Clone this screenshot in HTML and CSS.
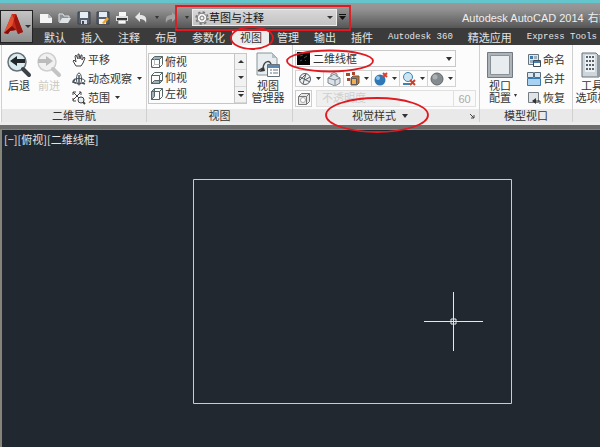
FILE: index.html
```html
<!DOCTYPE html>
<html lang="zh-CN">
<head>
<meta charset="utf-8">
<title>Autodesk AutoCAD 2014</title>
<link rel="stylesheet" href="styles.css">
</head>
<body>
<header class="top">
  <button class="app-btn" aria-label="应用程序菜单">
    <svg width="31" height="31" viewBox="0 0 31 31"><path d="M3 22 11 3h4l7 18-5 2-2-4-6 1-2 3z" fill="#c6281c"/><path d="M11 3 3 22l8-7 2-7z" fill="#e2512f"/><path d="M15 3l7 18-5 2-4-14z" fill="#9c150f"/><path d="M3 22l8-7 4 4-6 1-2 3z" fill="#7d100c"/><path d="M24 14h6l-3 3z" fill="#333"/></svg>
  </button>
  <div class="main">
    <div class="titlebar">
      <div class="qat">
        <button aria-label="新建"><svg width="14" height="14" viewBox="0 0 14 14"><path d="M1 3h8l4 4v5H1z" fill="#f4f4f4"/><path d="M9 3v4h4z" fill="#b9b9b9"/></svg></button>
        <button aria-label="打开"><svg width="14" height="14" viewBox="0 0 14 14"><path d="M1 11V3h4l1 2h5v2" fill="#8b9298" stroke="#dfe3e6"/><path d="M1 12l3-5h9l-3 5z" fill="#dfe3e6"/></svg></button>
        <button aria-label="保存"><svg width="14" height="14" viewBox="0 0 14 14"><path d="M1 1h12v12H1z" fill="#56606d" stroke="#3a434d"/><path d="M3 1h8v6H3z" fill="#e5edf4"/><path d="M4 9h6v4H4z" fill="#d3d9df"/><path d="M5 10h2v3H5z" fill="#3e4855"/></svg></button>
        <button aria-label="另存为"><svg width="14" height="14" viewBox="0 0 14 14"><path d="M1 1h12v12H1z" fill="#56606d" stroke="#3a434d"/><path d="M3 1h8v5H3z" fill="#e5edf4"/><path d="M3 8h7v5H3z" fill="#f1f1ee"/><path d="M6 12l5-6 2 2-5 5z" fill="#eba43a"/></svg></button>
        <button aria-label="打印"><svg width="14" height="14" viewBox="0 0 14 14"><path d="M4 1h7v4H4z" fill="#f7f7f7"/><path d="M1 5h12v5H1z" fill="#e1e1e1"/><path d="M2 7h10v2H2z" fill="#333"/><path d="M3 9h8v4H3z" fill="#f7f7f7" stroke="#555" stroke-width=".6"/></svg></button>
        <button aria-label="放弃"><svg width="14" height="14" viewBox="0 0 14 14"><path d="M1 6l5-5v3c5 0 7 2 6 8-1-3-3-4-6-4v3z" fill="#e6e6e6"/></svg></button>
        <svg class="tri" width="6" height="4" viewBox="0 0 6 4"><path d="M1 0h4L3 3z" fill="#333"/></svg>
        <button aria-label="重做"><svg width="14" height="14" viewBox="0 0 14 14"><path d="M13 6 8 1v3C3 4 1 6 2 12c1-3 3-4 6-4v3z" fill="#a3a3a3"/></svg></button>
        <svg class="tri" width="6" height="4" viewBox="0 0 6 4"><path d="M1 0h4L3 3z" fill="#333"/></svg>
      </div>
      <div class="workspace">
        <svg width="14" height="14" viewBox="0 0 14 14" fill="none" stroke="#777"><circle cx="7" cy="7" r="6" stroke-width="1.500" stroke-dasharray="2.400 2.300"/><circle cx="7" cy="7" r="4.800" fill="#f4f4f4"/><circle cx="7" cy="7" r="2"/></svg>
        <select aria-label="工作空间"><option>草图与注释</option></select>
        <svg class="tri" width="6" height="4" viewBox="0 0 6 4"><path d="M0 0h6L3 3z" fill="#333"/></svg>
      </div>
      <button class="more" aria-label="自定义快速访问工具栏"><svg width="7" height="7" viewBox="0 0 7 7"><path d="M0 0h7v1H0zM0 2h7L3.500 6z" fill="#111"/></svg></button>
      <div class="title">Autodesk AutoCAD 2014</div><div class="doc">右前</div>
    </div>
    <nav class="tabs">
      <a href="#">默认</a><a href="#">插入</a><a href="#">注释</a><a href="#">布局</a><a href="#">参数化</a><a href="#" class="active">视图</a><a href="#">管理</a><a href="#">输出</a><a href="#">插件</a><a href="#" class="latin">Autodesk 360</a><a href="#">精选应用</a><a href="#" class="latin">Express Tools</a>
    </nav>
  </div>
</header>

<section class="ribbon">
  <section class="panel nav-panel">
    <div class="body">
      <button class="big"><svg width="26" height="26" viewBox="0 0 26 26"><circle cx="11" cy="10" r="9" fill="#d9ebee" stroke="#657078" stroke-width="1.500"/><path d="M17 17l6 6" stroke="#3b4248" stroke-width="4" stroke-linecap="round"/><path d="M4 9l7-5v3h8v4h-8v3z" fill="#22272b"/></svg><span>后退</span></button>
      <button class="big off"><svg width="26" height="26" viewBox="0 0 26 26"><circle cx="11" cy="10" r="9" fill="#f1f1f1" stroke="#cfcfcf" stroke-width="1.500"/><path d="M17 17l6 6" stroke="#c4c4c4" stroke-width="4" stroke-linecap="round"/><path d="M17 9l-7-5v3H2v4h8v3z" fill="#bcbcbc"/></svg><span>前进</span></button>
      <div class="stack">
        <button><svg width="14" height="14" viewBox="0 0 14 14"><path d="M4 13 1 8l1-1 2 2-1-6 1-1 2 4 0-5h1l1 5 1-4 1 0 0 5 2-3 1 1-2 5-2 3z" fill="#fff" stroke="#444"/></svg>平移</button>
        <button><svg width="14" height="14" viewBox="0 0 14 14" fill="none" stroke="#46515b"><ellipse cx="7" cy="9" rx="6" ry="2.500"/><ellipse cx="7" cy="7" rx="2.500" ry="6"/><path d="M7 3v8M4 11l-3-1 2-3M10 11l3 1" stroke-width="1.500"/></svg>动态观察<svg class="tri" width="5" height="4" viewBox="0 0 5 4"><path d="M0 0h5L2.500 3z"/></svg></button>
        <button><svg width="14" height="14" viewBox="0 0 14 14" fill="none" stroke="#444"><path d="M1 4V1h3M1 1l7 7M7 1h2v3M9 1 1 9M1 7v3h3"/><circle cx="9" cy="9" r="3" fill="#e5eef2"/><path d="M11 11l2 2" stroke-width="2"/></svg>范围<svg class="tri" width="5" height="4" viewBox="0 0 5 4"><path d="M0 0h5L2.500 3z"/></svg></button>
      </div>
    </div>
    <h2>二维导航</h2>
  </section>

  <section class="panel view-panel">
    <div class="body">
      <div class="gallery">
        <div class="views">
          <button><svg width="14" height="14" viewBox="0 0 14 14" fill="#fff" stroke="#566"><path d="M1.500 4.500h8v8h-8zM9.500 12.500l3-3v-8l-3 3"/><path d="M1.500 4.500l3-3h8l-3 3z" fill="#9db0bb"/><path d="M4.500 4.500v5h5M4.500 9.500l-3 3" stroke="#bbb"/></svg>俯视</button>
          <button><svg width="14" height="14" viewBox="0 0 14 14" fill="none" stroke="#566"><path d="M1.500 12.500l3-3h8l-3 3z" fill="#9db0bb"/><path d="M1.500 4.500h8v8h-8zM1.500 4.500l3-3h8l-3 3M12.500 1.500v8"/></svg>仰视</button>
          <button><svg width="14" height="14" viewBox="0 0 14 14" fill="none" stroke="#566"><path d="M1.500 4.500l3-3v8l-3 3z" fill="#9db0bb"/><path d="M1.500 4.500h8v8h-8zM4.500 1.500h8l-3 3M12.500 1.500v8l-3 3"/></svg>左视</button>
        </div>
        <div class="scroll">
          <button aria-label="上一行"><svg width="6" height="4" viewBox="0 0 6 4"><path d="M0 3h6L3 0z"/></svg></button>
          <button aria-label="下一行"><svg width="6" height="4" viewBox="0 0 6 4"><path d="M0 0h6L3 3z"/></svg></button>
          <button aria-label="展开"><svg width="6" height="6" viewBox="0 0 6 6"><path d="M0 0h6v1H0zM0 3h6L3 6z"/></svg></button>
        </div>
      </div>
      <button class="big"><svg width="26" height="26" viewBox="0 0 26 26"><path d="M2 1h15l5 5v17H2z" fill="#e8edf0" stroke="#8a949b"/><path d="M17 1v5h5z" fill="#b6c0c6"/><path d="M3 19l5-3c1-8 8-8 8-3" fill="none" stroke="#444" stroke-width="1.500"/><path d="M4 20l5-5 1 4z" fill="#333"/><path d="M12.500 12.500h12v12h-12z" fill="#fff" stroke="#66727c"/><path d="M13 13h11v3H13z" fill="#5c89b2"/><path d="M15 18h2m1 0h5m-8 3h2m1 0h5" stroke="#678"/></svg><span>视图<br>管理器</span></button>
    </div>
    <h2>视图</h2>
  </section>

  <section class="panel style-panel">
    <div class="body">
      <div class="style-select">
        <svg width="13" height="13" viewBox="0 0 13 13"><path d="M0 0h13v13H0z" fill="#050505"/><path d="M3 4l3-1m1 3 3-2M3 9l2-1m3 1 1-1" stroke="#505050"/></svg>
        <select aria-label="视觉样式"><option>二维线框</option></select>
        <svg class="tri" width="6" height="4" viewBox="0 0 6 4"><path d="M0 0h6L3 4z"/></svg>
      </div>
      <div class="tools">
        <button aria-label="面样式"><svg width="14" height="14" viewBox="0 0 14 14" fill="#eef0f1" stroke="#596066"><circle cx="7" cy="7" r="5.500"/><path d="M2 5l10 5M8 1.500 5 12M2 8l6-6M7 8l5-3" fill="none"/></svg><svg class="tri" width="5" height="4" viewBox="0 0 5 4"><path d="M0 0h5L2.500 3z"/></svg></button>
        <button class="slim" aria-label="X 射线"><svg width="14" height="14" viewBox="0 0 14 14"><path d="M1 6l6-4 6 4v5l-5 3-7-3z" fill="#dce2e7" stroke="#7c8790"/><path d="M1 6l7 2 5-2M8 8v5M4 5V2q3-3 6 0v3" fill="none" stroke="#7c8790"/></svg></button>
        <button aria-label="材质"><svg width="14" height="14" viewBox="0 0 14 14"><path d="M0 1h4v3H0zM6 0h3v3H6zM1 6h3v3H1z" fill="#a5482f"/><path d="M5 6l2-2h6v7l-2 2H5z" fill="#c96f22" stroke="#6a5a50"/><path d="M5.500 6.500h5v6h-5z" fill="#f3ad55" stroke="#5a5a58"/></svg><svg class="tri" width="5" height="4" viewBox="0 0 5 4"><path d="M0 0h5L2.500 3z"/></svg></button>
        <button aria-label="阴影"><svg width="14" height="14" viewBox="0 0 14 14"><circle cx="6" cy="8" r="5.500" fill="#2f78b8"/><circle cx="4" cy="6" r="2" fill="#8fc2e8"/><path d="M9 1l4 4m0-4L9 5" stroke="#d5402f" stroke-width="2"/></svg><svg class="tri" width="5" height="4" viewBox="0 0 5 4"><path d="M0 0h5L2.500 3z"/></svg></button>
        <button aria-label="光源"><svg width="14" height="14" viewBox="0 0 14 14"><circle cx="6" cy="5" r="4.500" fill="#cde5f2" stroke="#3c82b0"/><path d="M1 12h7" stroke="#3c82b0" stroke-width="2"/><path d="M8 8l5 5m0-5-5 5" stroke="#c9402f" stroke-width="2"/></svg><svg class="tri" width="5" height="4" viewBox="0 0 5 4"><path d="M0 0h5L2.500 3z"/></svg></button>
        <button aria-label="着色"><svg width="14" height="14" viewBox="0 0 14 14"><circle cx="7" cy="7" r="6" fill="#858c91" stroke="#666"/><circle cx="5" cy="5" r="2.500" fill="#aab0b4"/></svg><svg class="tri" width="5" height="4" viewBox="0 0 5 4"><path d="M0 0h5L2.500 3z"/></svg></button>
      </div>
      <div class="opacity">
        <button aria-label="透明"><svg width="14" height="14" viewBox="0 0 14 14" fill="#e7e7e7" stroke="#777"><path d="M1.500 4.500l3-3h8v8l-3 3h-8z"/><path d="M1.500 4.500h8v8M9.500 4.500l3-3" fill="none"/><circle cx="6" cy="8" r="2.500" fill="#fff" stroke="#aaa"/></svg></button>
        <label class="bar"><span>不透明度</span><input value="60" disabled></label>
      </div>
    </div>
    <h2>视觉样式<svg class="tri" width="6" height="4" viewBox="0 0 6 4"><path d="M0 0h6L3 4z"/></svg><svg class="launch" width="5" height="5" viewBox="0 0 5 5"><path d="M0 0l4 4M4 1v3H1" fill="none" stroke="#444"/></svg></h2>
  </section>

  <section class="panel port-panel">
    <div class="body">
      <button class="big"><svg width="26" height="26" viewBox="0 0 26 26"><path d="M.5.5h25v25H.5z" fill="#aeb5ba" stroke="#727a80"/><path d="M3.500 3.500h19v19h-19z" fill="#e9ecee" stroke="#899299"/></svg><span>视口<br>配置</span><svg class="corner" width="3" height="3" viewBox="0 0 3 3"><path d="M0 0h3L1.500 3z"/></svg></button>
      <div class="stack">
        <button><svg width="14" height="14" viewBox="0 0 14 14"><path d="M1.500 1.500h10v10h-10z" fill="#e1e7eb" stroke="#66747e"/><path d="M3 3h3v3H3z" fill="#3c78ae"/><path d="M7 3h3v3H7zM3 7h3v3H3z" fill="#9eafbc"/><path d="M6.500 7.500h7v6h-7z" fill="#fff" stroke="#3b4a56"/><path d="M7 8h6v2H7z" fill="#487fac"/></svg>命名</button>
        <button><svg width="14" height="14" viewBox="0 0 14 14"><path d="M.5.500h6v5h-6zM7.500.500h6v5h-6z" fill="#dce8f1" stroke="#5a6c7a"/><path d="M.5 6.500h13v7H.5z" fill="#a9d2f2" stroke="#3b79ac"/></svg>合并</button>
        <button><svg width="14" height="14" viewBox="0 0 14 14"><path d="M1.500 1.500h10v10h-10z" fill="#e1e4e6" stroke="#747d83"/><path d="M13 13v-3H7" fill="none" stroke="#333"/><path d="M9 7v6l-4-3z" fill="#333"/></svg>恢复</button>
      </div>
    </div>
    <h2>模型视口</h2>
  </section>

  <section class="panel tool-panel">
    <div class="body">
      <button class="big"><svg width="22" height="26" viewBox="0 0 22 26"><path d="M1 1h14l3 3v21H1z" fill="#cfd6db" stroke="#68737b"/><path d="M4 3h10v17H4z" fill="#eef1f3"/><path d="M5 4h2v2H5zm3 0h2v2H8zm3 0h2v2h-2zM5 8h2v2H5zm3 0h2v2H8zm3 0h2v2h-2zM5 12h2v2H5zm3 0h2v2H8zm3 0h2v2h-2zM5 16h2v2H5zm3 0h2v2H8zm3 0h2v2h-2z" fill="#59646c"/><path d="M16 3h5v22h-5z" fill="#8f9aa2"/></svg><span>工具<br>选项板</span></button>
    </div>
    <h2>&nbsp;</h2>
  </section>
</section>

<main class="canvas">
  <p>[−][俯视][二维线框]</p>
  <svg class="drawing" width="600" height="316" viewBox="0 0 600 316" fill="none" stroke="#c9ccd0"><path d="M191.500 49.500h318v224h-318z"/><path d="M422 191.500h59M451.500 162v59" stroke="#e6e8ea"/><path d="M449 189h5v5h-5z" stroke="#e6e8ea"/></svg>
</main>

<svg class="marks" width="600" height="140" viewBox="0 0 600 140" fill="none" stroke="#e01a20" stroke-width="1.800"><path d="M176 6h174v24H176z"/><ellipse cx="252" cy="38" rx="21" ry="11"/><ellipse cx="330" cy="61" rx="43" ry="10.500"/><ellipse cx="377" cy="115" rx="51" ry="17"/></svg>
</body>
</html>
```

FILE: styles.css
```css
* { box-sizing: border-box; }
html, body { height: 100%; }
body {
  margin: 0;
  display: flex;
  flex-direction: column;
  overflow: hidden;
  position: relative;
  background: #6d6e6c;
  color: #333;
  font: 11px/12px "Liberation Sans", "Noto Sans CJK SC", sans-serif;
}
button, select, input { font: inherit; color: inherit; border: 0; margin: 0; padding: 0; background: none; }
button { display: flex; align-items: center; }
select { appearance: none; }
svg { display: block; flex: none; }
.tri, .scroll svg, .corner { fill: #333; }

.top { position: relative; border-top: 3px solid #65c5cd; }
.app-btn {
  position: absolute;
  left: 0;
  top: 7px;
  width: 33px;
  height: 33px;
  border: 1px solid #222;
  background: linear-gradient(#c4c4c4, #8d8d8d);
}
.titlebar {
  display: flex;
  align-items: center;
  height: 25px;
  padding: 4px 0 0 39px;
  background: linear-gradient(#999, #929292 25%, #565656);
  overflow: hidden;
}
.qat { display: flex; flex: none; align-items: center; gap: 5px; }
.qat .tri { margin: 0 1px; }
.qat button:last-of-type { margin-left: -2px; }
.workspace {
  display: flex;
  flex: none;
  align-items: center;
  width: 145px;
  height: 17px;
  margin-left: 1px;
  padding: 0 3px 0 2px;
  border: 1px solid #ececec;
  background: linear-gradient(#d8d8d8, #c3c3c3);
  color: #111;
}
.workspace select, .style-select select { flex: 1; min-width: 0; height: 15px; }
.more { flex: none; margin-left: 2px; }
.title { flex: none; margin-left: 116px; color: #eee; white-space: nowrap; }
.doc { flex: none; margin-left: 4px; color: #eee; white-space: nowrap; }
.tabs {
  display: flex;
  align-items: flex-end;
  height: 17px;
  padding-left: 36px;
  background: #3b3b3b;
  overflow: hidden;
}
.tabs a {
  flex: none;
  padding: 0 7px 0 8px;
  font-family: "Noto Sans CJK SC", sans-serif;
  line-height: 15px;
  color: #e4e4e4;
  text-decoration: none;
  white-space: nowrap;
}
.tabs .latin { font-family: "Liberation Mono", monospace; font-size: 9px; }
.tabs .active { background: #ededed; color: #333; }

.ribbon { display: flex; padding-left: 1px; background: #fcfcfc; border-bottom: 3px solid #ececec; overflow: hidden; }
.panel { flex: none; display: flex; flex-direction: column; border-left: 1px solid #d0d0d0; }
.body { display: flex; height: 64px; padding-top: 5px; }
.panel h2 {
  display: flex;
  align-items: center;
  justify-content: center;
  position: relative;
  height: 13px;
  margin: 0;
  background: #e9e9e9;
  font-size: 11px;
  font-weight: 400;
}
.nav-panel { width: 145px; }
.view-panel { width: 146px; }
.style-panel { width: 187px; }
.port-panel { width: 93px; }
.tool-panel { flex: 1 0 40px; }

.big { position: relative; flex-direction: column; justify-content: flex-start; width: 30px; padding-top: 2px; text-align: center; white-space: nowrap; }
.big span { margin-top: 2px; }
.off { color: #c9c9c4; }
.corner { position: absolute; right: -2px; top: 44px; }
.stack { display: flex; flex-direction: column; padding-left: 8px; }
.stack button { height: 19px; gap: 2px; white-space: nowrap; }
.stack .tri { margin-left: 3px; }
.nav-panel .body { padding-left: 2px; }

.gallery { display: flex; width: 99px; height: 51px; margin: 3px 6px 0 1px; border: 1px solid #c6c6c6; }
.views { flex: 1; padding-left: 1px; }
.views button { height: 16px; gap: 1px; }
.scroll { width: 12px; display: flex; flex-direction: column; border-left: 1px solid #c6c6c6; background: #f2f2f2; }
.scroll button { flex: 1; justify-content: center; border-bottom: 1px solid #d8d8d8; }

.style-panel .body { flex-direction: column; gap: 3px; padding: 5px 3px 0 2px; }
.style-select { display: flex; align-items: center; gap: 3px; width: 161px; height: 17px; padding: 0 3px 0 1px; border: 1px solid #c8c8c8; }
.tools { display: flex; width: 161px; height: 17px; border: 1px solid #d2d2d2; }
.tools button { flex: 1; justify-content: center; gap: 4px; border-right: 1px solid #d2d2d2; }
.tools .slim { flex: 0 0 20px; }
.tools button:last-child { border-right: 0; }
.opacity { display: flex; gap: 4px; height: 17px; }
.opacity button { width: 17px; justify-content: center; border: 1px solid #ccc; }
.bar { flex: 1; display: flex; border: 1px solid #e0e0e0; color: #d0d0d0; background: linear-gradient(90deg, #efefef 83px, #fafafa 83px); }
.bar span { flex: 1; padding-left: 5px; line-height: 15px; }
.bar input { width: 22px; border-left: 1px solid #e0e0e0; text-align: center; color: #aaa; }
.style-panel h2 { gap: 6px; padding-right: 12px; }
.launch { position: absolute; right: 4px; top: 5px; }

.port-panel .body { padding-left: 5px; }
.port-panel .stack { padding-left: 12px; }
.tool-panel .body { padding-left: 4px; }

.canvas {
  flex: 1;
  position: relative;
  margin-top: 4px;
  border: solid #85857a;
  border-width: 1px 0 0 2px;
  background: #212830;
  color: #e3e3e3;
  overflow: hidden;
}
.canvas p { margin: 3px 2px; font-family: "Noto Sans CJK SC", sans-serif; }
.drawing { position: absolute; left: 0; top: 0; }
.marks { position: absolute; left: 0; top: 0; pointer-events: none; }
```
